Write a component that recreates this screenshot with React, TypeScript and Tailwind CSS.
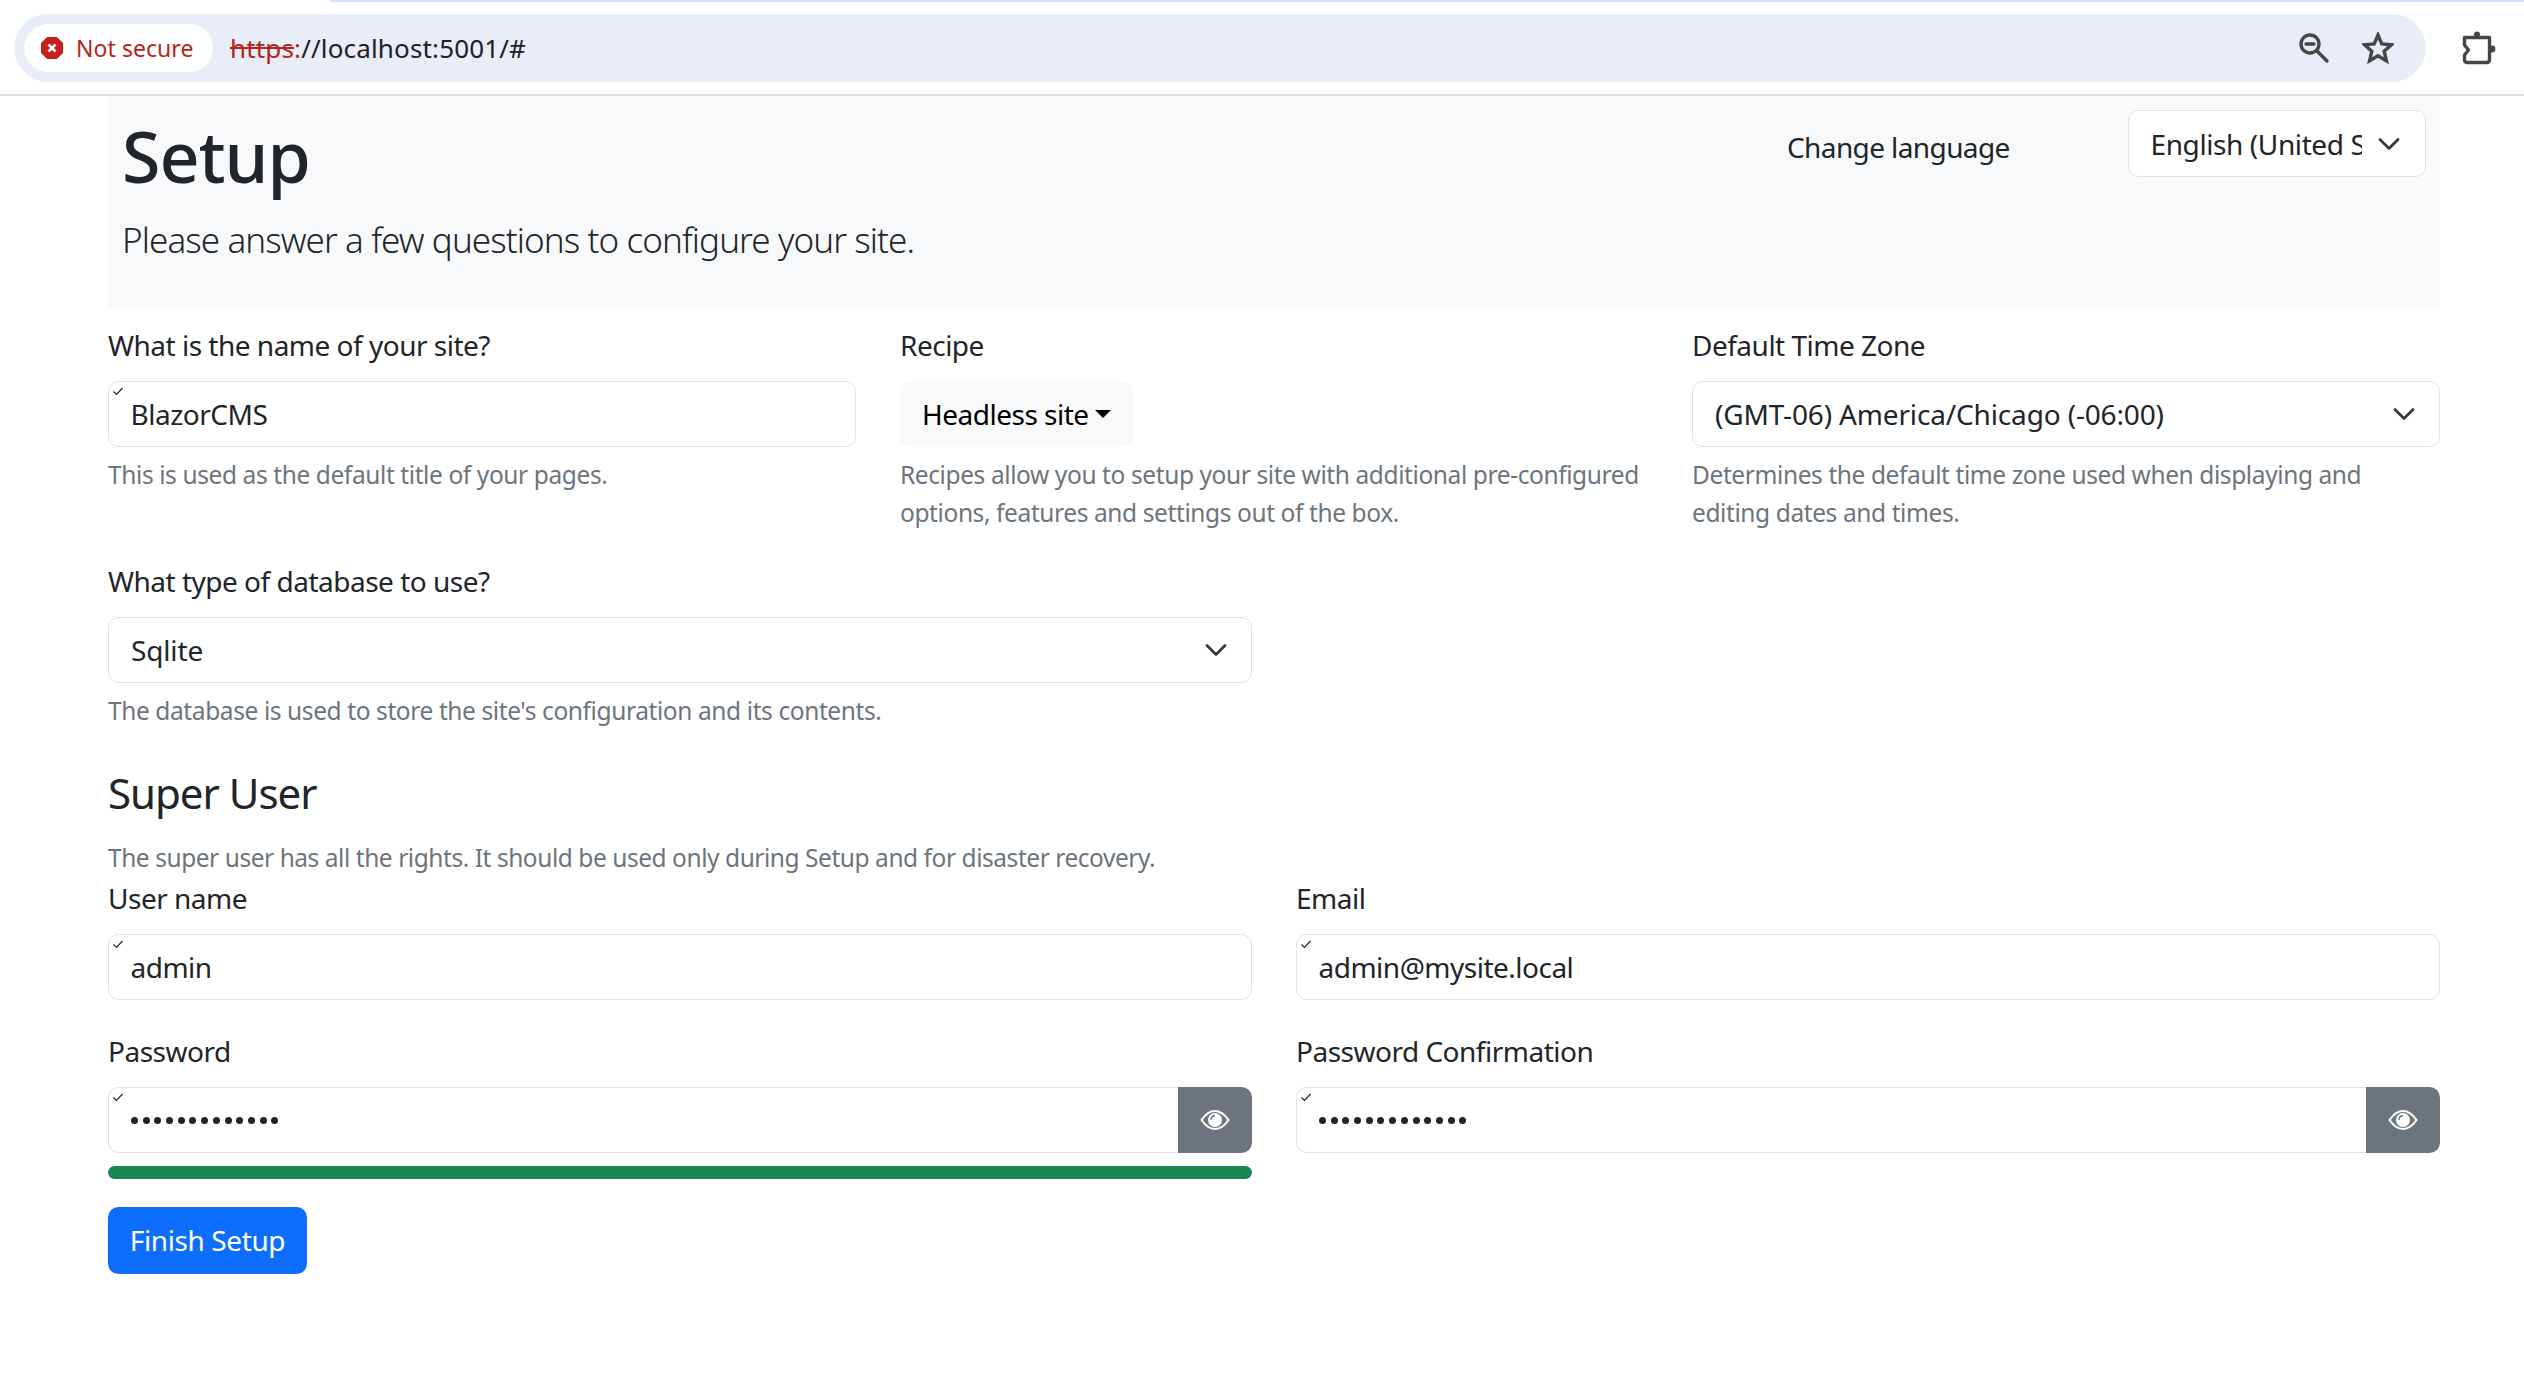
const font = { fontFamily: '"Noto Sans", "Open Sans", sans-serif' };

function Check() {
  return (
    <svg className="absolute left-[3px] top-[3px] h-[12px] w-[12px]" viewBox="0 0 12 12" fill="none">
      <path d="M1.5 6.5 L4.5 9.5 L10.5 3" stroke="#212529" strokeWidth="1.2" />
    </svg>
  );
}

function Chevron() {
  return (
    <svg className="h-[24px] w-[24px] shrink-0" viewBox="0 0 16 16" fill="none">
      <path d="m2 5 6 6 6-6" stroke="#343a40" strokeWidth="1.8" strokeLinecap="round" strokeLinejoin="round" />
    </svg>
  );
}

function Eye() {
  return (
    <svg className="h-[26px] w-[30px]" viewBox="0 0 30 26" fill="none">
      <path d="M1.5 13 C6 6.5 10.5 4 15 4 C19.5 4 24 6.5 28.5 13 C24 19.5 19.5 22 15 22 C10.5 22 6 19.5 1.5 13 Z" stroke="white" strokeWidth="2" />
      <circle cx="15" cy="13" r="7" fill="white" />
      <path d="M11 13 C11 10.5 12.6 8.8 15 8.5" stroke="#6c757d" strokeWidth="1.4" />
    </svg>
  );
}

function Label({ children }: { children: React.ReactNode }) {
  return <div className="mb-[14px] h-[42px] text-[28px] leading-[41px] tracking-[-0.5px] text-[#212529]">{children}</div>;
}

function Help({ children }: { children: React.ReactNode }) {
  return <div className="mt-[9px] text-[24.5px] leading-[37.5px] tracking-[-0.4px] text-[#6c757d]">{children}</div>;
}

function Input({ value }: { value: string }) {
  return (
    <div className="relative flex h-[66px] items-center rounded-[10.5px] border-[1.5px] border-[#dee2e6] bg-white px-[21.5px] text-[28px] tracking-[-0.5px] text-[#212529]">
      <Check />
      {value}
    </div>
  );
}

function Select({ value }: { value: string }) {
  return (
    <div className="flex h-[66px] items-center justify-between rounded-[10.5px] border-[1.5px] border-[#dee2e6] bg-white pl-[22px] pr-[23px] text-[28px] tracking-[-0.15px] text-[#212529]">
      {value}
      <Chevron />
    </div>
  );
}

function PasswordInput() {
  return (
    <div className="flex h-[66px]">
      <div className="relative flex min-w-0 flex-1 items-center rounded-l-[10.5px] border-[1.5px] border-r-0 border-[#dee2e6] bg-white pl-[22px] text-[#212529]">
        <Check />
        <div className="flex gap-[4.7px] pt-[1px]">
          {Array.from({ length: 13 }).map((_, i) => (
            <span key={i} className="h-[7px] w-[7px] rounded-full bg-[#212529]" />
          ))}
        </div>
      </div>
      <div className="flex w-[74px] items-center justify-center rounded-r-[10.5px] bg-[#6c757d]">
        <Eye />
      </div>
    </div>
  );
}

export default function App() {
  return (
    <div style={font} className="min-h-[1384px] bg-white">
      <header className="relative h-[96px] border-b-2 border-[#e1e1e1] bg-white">
        <div className="absolute right-0 top-0 h-[2px] w-[2194px] bg-[#d3e3fd]" />
        <div className="flex items-center pl-[14px] pt-[14px]">
          <div className="flex h-[68px] w-[2412px] items-center justify-between rounded-full bg-[#e9edf7] pl-[10px] pr-[32px]">
            <div className="flex items-center">
              <div className="flex h-[48px] w-[189px] items-center gap-[12px] rounded-full bg-white pl-[16px] text-[23px] tracking-[0.05px] text-[#b3261e]">
                <svg className="h-[24px] w-[24px]" viewBox="0 0 24 24">
                  <path d="M7 1 H17 L23 7 V17 L17 23 H7 L1 17 V7 Z" fill="#c5221f" />
                  <path d="M8.5 8.5 L15.5 15.5 M15.5 8.5 L8.5 15.5" stroke="white" strokeWidth="2.6" />
                </svg>
                Not secure
              </div>
              <div className="ml-[17px] text-[26px] tracking-[0.15px] text-[#202124]">
                <span className="text-[#b3261e] line-through">https</span>
                <span className="text-[#b3261e]">:</span>//localhost:5001/#
              </div>
            </div>
            <div className="flex items-center gap-[32px]">
              <svg className="h-[32px] w-[32px]" viewBox="0 0 32 32" fill="none" stroke="#444746" strokeWidth="3.4" strokeLinecap="round">
                <circle cx="12" cy="12" r="9" />
                <path d="M19 19 L29 29" />
                <path d="M8 12 H16" />
              </svg>
              <svg className="h-[32px] w-[32px]" viewBox="0 0 32 32" fill="none" stroke="#444746" strokeWidth="3.4" strokeLinejoin="miter">
                <path d="M16 3 L19.8 12 L29.5 12.8 L22.2 19.2 L24.4 28.8 L16 23.7 L7.6 28.8 L9.8 19.2 L2.5 12.8 L12.2 12 Z" />
              </svg>
            </div>
          </div>
          <svg className="ml-[36px] h-[34px] w-[34px]" viewBox="0 0 34 34" fill="none" stroke="#444746" strokeWidth="3.4" strokeLinejoin="round">
            <path d="M2.5 6.5 H27.5 V28.5 A3 3 0 0 1 25 31.5 H5 A3 3 0 0 1 2.5 28.5 V24 L6.5 19 L2.5 14 Z" />
            <circle cx="15" cy="3.5" r="3" fill="#444746" stroke="none" />
            <circle cx="30" cy="18" r="3.4" fill="#444746" stroke="none" />
          </svg>
        </div>
      </header>

      <main className="ml-[108px] mr-[84px]">
        <section className="flex h-[212px] bg-[#f8f9fa] pl-[14px]">
          <div className="flex-1">
            <h1 className="mt-[18px] text-[70px] font-medium leading-[84px] tracking-[-1px] text-[#212529]">Setup</h1>
            <p className="mt-[16px] text-[35px] font-light leading-[52px] tracking-[-0.9px] text-[#212529]">
              Please answer a few questions to configure your site.
            </p>
          </div>
          <div className="mt-[30px] w-[341px] text-[28px] leading-[42px] tracking-[-0.6px] text-[#212529]">Change language</div>
          <div className="mr-[14px] mt-[14px] flex h-[67px] w-[298px] items-center rounded-[10.5px] border-[1.5px] border-[#dee2e6] bg-white pl-[21.5px] text-[28px] tracking-[-0.4px] text-[#212529]">
            <span className="w-[211px] overflow-hidden whitespace-nowrap">English (United States)</span>
            <span className="ml-[15px]">
              <Chevron />
            </span>
          </div>
        </section>

        <div className="mt-[17px] grid grid-cols-3 gap-[44px]">
          <div>
            <Label>What is the name of your site?</Label>
            <Input value="BlazorCMS" />
            <Help>This is used as the default title of your pages.</Help>
          </div>
          <div>
            <Label>Recipe</Label>
            <div className="flex h-[66px] w-fit items-center gap-[6px] rounded-[10.5px] bg-[#f8f9fa] px-[22px] text-[28px] tracking-[-0.5px] text-black">
              Headless site
              <span className="h-0 w-0 border-x-[8px] border-t-[8px] border-x-transparent border-t-black" />
            </div>
            <Help>Recipes allow you to setup your site with additional pre-configured options, features and settings out of the box.</Help>
          </div>
          <div>
            <Label>Default Time Zone</Label>
            <Select value="(GMT-06) America/Chicago (-06:00)" />
            <Help>Determines the default time zone used when displaying and editing dates and times.</Help>
          </div>
        </div>

        <div className="mt-[30px] w-[1144px]">
          <Label>What type of database to use?</Label>
          <Select value="Sqlite" />
          <Help>The database is used to store the site's configuration and its contents.</Help>
        </div>

        <h2 className="mt-[38px] text-[42px] font-normal leading-[50px] tracking-[-1px] text-[#212529]">Super User</h2>
        <div className="mt-[21px] text-[24.5px] leading-[37px] tracking-[-0.45px] text-[#6c757d]">
          The super user has all the rights. It should be used only during Setup and for disaster recovery.
        </div>

        <div className="mt-[2px] grid grid-cols-2 gap-x-[44px] gap-y-[31px]">
          <div>
            <Label>User name</Label>
            <Input value="admin" />
          </div>
          <div>
            <Label>Email</Label>
            <Input value="admin@mysite.local" />
          </div>
          <div>
            <Label>Password</Label>
            <PasswordInput />
            <div className="mt-[13px] h-[13px] rounded-[10.5px] bg-[#198754]" />
          </div>
          <div>
            <Label>Password Confirmation</Label>
            <PasswordInput />
          </div>
        </div>

        <button className="mt-[28px] flex h-[67px] w-[199px] items-center justify-center rounded-[10.5px] bg-[#0d6efd] text-[28px] tracking-[-0.4px] text-white">
          Finish Setup
        </button>
      </main>
    </div>
  );
}
